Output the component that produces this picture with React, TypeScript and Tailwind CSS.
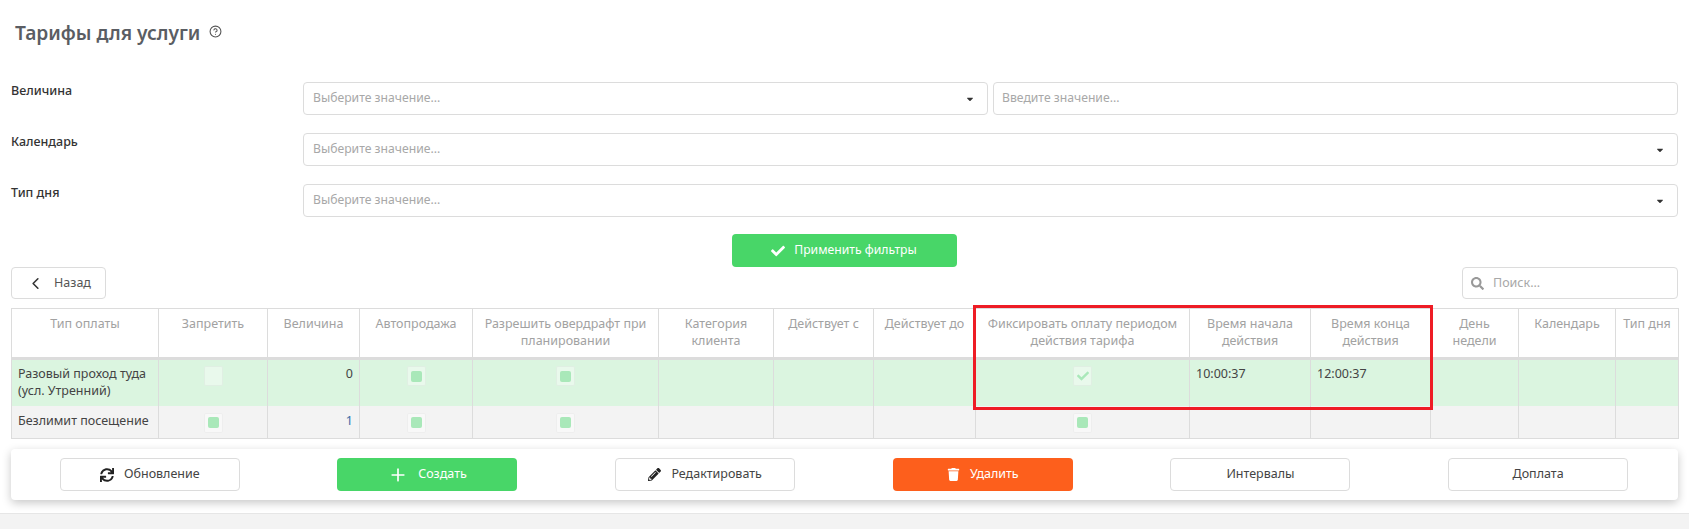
import { FaCaretDown, FaCheck, FaPencilAlt, FaSearch, FaSync, FaTrash } from "react-icons/fa";
import { FiChevronLeft, FiPlus } from "react-icons/fi";
import { LuCircleHelp } from "react-icons/lu";

const FONT = "font-['Noto_Sans',sans-serif]";

const columns = [
  { title: "Тип оплаты", width: "w-[147px]" },
  { title: "Запретить", width: "w-[109px]" },
  { title: "Величина", width: "w-[92px]" },
  { title: "Автопродажа", width: "w-[113px]" },
  { title: "Разрешить овердрафт при планировании", width: "w-[186px]" },
  { title: "Категория клиента", width: "w-[115px]" },
  { title: "Действует с", width: "w-[100px]" },
  { title: "Действует до", width: "w-[102px]" },
  { title: "Фиксировать оплату периодом действия тарифа", width: "w-[214px]" },
  { title: "Время начала действия", width: "w-[121px]" },
  { title: "Время конца действия", width: "w-[120px]" },
  { title: "День\nнедели", width: "w-[88px]" },
  { title: "Календарь", width: "w-[97px]" },
  { title: "Тип дня", width: "w-[63px]" },
];

const cell = "border-x border-[#dcdcdc]";
const textCell = "border-x border-[#dcdcdc] pl-[6px] pr-0 pt-[5px] align-top leading-[17px]";
const checkCell = "border-x border-[#dcdcdc] pt-[6px] align-top";
const textCellLow = "border-x border-[#dcdcdc] pl-[6px] pr-0 pt-[6px] align-top leading-[17px]";
const checkCellLow = "border-x border-[#dcdcdc] pt-[7px] align-top";

const Check = ({ state }: { state: "empty" | "filled" | "checked" }) => (
  <div className="mx-auto flex h-[20px] w-[19px] items-center justify-center rounded-[2px] border border-black/[0.04] bg-white/40">
    {state === "filled" && <div className="h-[11px] w-[11px] rounded-[2px] bg-[#a9e8b9]" />}
    {state === "checked" && <FaCheck className="text-[12px] text-[#a9e8b9]" />}
  </div>
);

const Dropdown = ({ grow }: { grow?: boolean }) => (
  <div className={`flex h-[33px] items-center justify-between rounded-[4px] border border-[#dcdcdc] pl-[9px] pr-[12px] ${grow ? "w-[685px]" : "flex-1"}`}>
    <span className="text-[12.2px] text-[#a8a8a8]">Выберите значение...</span>
    <FaCaretDown className="text-[10px] text-[#333]" />
  </div>
);

const FilterRow = ({ label, children }: { label: string; children: React.ReactNode }) => (
  <div className="flex">
    <div className="w-[292px] pt-[1px] text-[12.5px] leading-[16px] font-medium text-[#333]">{label}</div>
    <div className="flex flex-1 gap-[5px]">{children}</div>
  </div>
);

const ActionButton = ({
  label,
  icon,
  color = "border border-[#dcdcdc] text-[#444]",
}: {
  label: string;
  icon?: React.ReactNode;
  color?: string;
}) => (
  <button className={`flex h-[33px] w-[180px] items-center justify-center gap-[10px] rounded-[4px] text-[12.5px] ${color}`}>
    {icon}
    {label}
  </button>
);

export default function App() {
  return (
    <div className={`flex h-[529px] w-[1689px] flex-col overflow-hidden bg-white ${FONT}`}>
      <div className="flex h-[82px] items-start pl-[15px] pt-[18px]">
        <h1 className="text-[19.2px] leading-[30px] font-semibold text-[#5a5d63]">Тарифы для услуги</h1>
        <LuCircleHelp className="ml-[9px] mt-[7px] text-[13px] text-[#555]" />
      </div>

      <div className="flex flex-col gap-[18px] pl-[11px] pr-[11px]">
        <FilterRow label="Величина">
          <Dropdown grow />
          <div className="flex h-[33px] flex-1 items-center rounded-[4px] border border-[#dcdcdc] pl-[8px] text-[12.2px] text-[#a8a8a8]">
            Введите значение...
          </div>
        </FilterRow>
        <FilterRow label="Календарь">
          <Dropdown />
        </FilterRow>
        <FilterRow label="Тип дня">
          <Dropdown />
        </FilterRow>
      </div>

      <div className="mt-[17px] flex justify-center pr-[1px]">
        <button className="flex h-[33px] w-[225px] items-center justify-center gap-[9px] rounded-[4px] bg-[#48d668] text-[12.2px] text-white">
          <FaCheck className="text-[14px]" />
          Применить фильтры
        </button>
      </div>

      <div className="flex justify-between pl-[11px] pr-[11px]">
        <button className="flex h-[32px] w-[95px] items-center justify-center gap-[9px] rounded-[4px] border border-[#dcdcdc] text-[12.5px] text-[#555]">
          <FiChevronLeft className="text-[19px] text-[#333]" />
          Назад
        </button>
        <div className="flex h-[32px] w-[216px] items-center gap-[9px] rounded-[4px] border border-[#dcdcdc] pl-[8px] text-[12.5px] text-[#a8a8a8]">
          <FaSearch className="text-[13px] text-[#999]" />
          Поиск...
        </div>
      </div>

      <div className="relative ml-[11px] mt-[9px] w-[1667px]">
        <table className="w-full table-fixed border-collapse text-[12.5px]">
          <colgroup>
            {columns.map((c) => (
              <col key={c.title} className={c.width} />
            ))}
          </colgroup>
          <thead>
            <tr className="h-[50px] border-b-[3px] border-[#dcdcdc]">
              {columns.map((c) => (
                <th key={c.title} className="whitespace-pre-line border border-b-0 border-[#dcdcdc] px-[4px] pt-[6px] align-top text-center text-[12.5px] leading-[17px] font-normal text-[#a2a2a2]">
                  {c.title}
                </th>
              ))}
            </tr>
          </thead>
          <tbody className="text-[#444]">
            <tr className="h-[47px] bg-[#dbf5e0]">
              <td className={textCell}>Разовый проход туда (усл. Утренний)</td>
              <td className={checkCell}><Check state="empty" /></td>
              <td className={`${textCell} pr-[6px] text-right`}>0</td>
              <td className={checkCell}><Check state="filled" /></td>
              <td className={checkCell}><Check state="filled" /></td>
              <td className={cell} />
              <td className={cell} />
              <td className={cell} />
              <td className={checkCell}><Check state="checked" /></td>
              <td className={textCell}>10:00:37</td>
              <td className={textCell}>12:00:37</td>
              <td className={cell} />
              <td className={cell} />
              <td className={cell} />
            </tr>
            <tr className="h-[33px] border-b border-[#dcdcdc] bg-[#f3f3f3]">
              <td className={`${textCellLow} whitespace-nowrap`}>Безлимит посещение</td>
              <td className={checkCellLow}><Check state="filled" /></td>
              <td className={`${textCellLow} pr-[6px] text-right text-[#3b6ea8]`}>1</td>
              <td className={checkCellLow}><Check state="filled" /></td>
              <td className={checkCellLow}><Check state="filled" /></td>
              <td className={cell} />
              <td className={cell} />
              <td className={cell} />
              <td className={checkCellLow}><Check state="filled" /></td>
              <td className={cell} />
              <td className={cell} />
              <td className={cell} />
              <td className={cell} />
              <td className={cell} />
            </tr>
          </tbody>
        </table>
        <div className="pointer-events-none absolute left-[962px] top-[-3px] h-[105px] w-[460px] border-[3px] border-[#ee1c25]" />
      </div>

      <div className="ml-[11px] mt-[10px] flex h-[51px] w-[1667px] items-center justify-around rounded-[4px] bg-white pr-[1px] shadow-[0_3px_10px_rgba(0,0,0,0.22)]">
        <ActionButton label="Обновление" icon={<FaSync className="text-[14px] text-[#222]" />} />
        <ActionButton label="Создать" color="bg-[#48d668] text-white" icon={<FiPlus className="text-[20px]" />} />
        <ActionButton label="Редактировать" icon={<FaPencilAlt className="text-[13px] text-[#222]" />} />
        <ActionButton label="Удалить" color="bg-[#fd5f1c] text-white" icon={<FaTrash className="text-[13px]" />} />
        <ActionButton label="Интервалы" />
        <ActionButton label="Доплата" />
      </div>

      <div className="mt-[13px] flex-1 border-t border-[#e6e6e6] bg-[#f3f3f3]" />
    </div>
  );
}
